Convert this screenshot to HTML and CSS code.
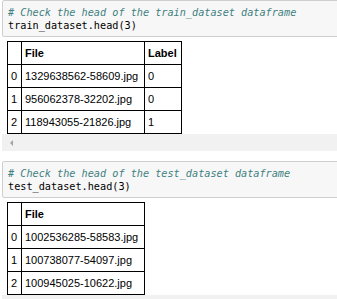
FILE: index.html
```html
<!DOCTYPE html>
<html lang="en">
<head>
  <meta charset="UTF-8" />
  <title>Notebook cells</title>
  <link rel="stylesheet" href="styles.css">
</head>
<body>
  <div class="cell">
    <div class="code">
      <div class="line comment"># Check the head of the train_dataset dataframe</div>
      <div class="line">train_dataset.head(<span class="num">3</span>)</div>
    </div>
    <div class="output">
      <table>
        <thead>
          <tr>
            <th class="idx"></th>
            <th class="file">File</th>
            <th class="label">Label</th>
          </tr>
        </thead>
        <tbody>
          <tr><td class="idx">0</td><td>1329638562-58609.jpg</td><td>0</td></tr>
          <tr><td class="idx">1</td><td>956062378-32202.jpg</td><td>0</td></tr>
          <tr><td class="idx">2</td><td>118943055-21826.jpg</td><td>1</td></tr>
        </tbody>
      </table>
    </div>
    <div class="scrollbar"><span class="arrow"></span></div>
  </div>

  <div class="cell">
    <div class="code">
      <div class="line comment"># Check the head of the test_dataset dataframe</div>
      <div class="line">test_dataset.head(<span class="num">3</span>)</div>
    </div>
    <div class="output">
      <table>
        <thead>
          <tr>
            <th class="idx"></th>
            <th class="file">File</th>
          </tr>
        </thead>
        <tbody>
          <tr><td class="idx">0</td><td>1002536285-58583.jpg</td></tr>
          <tr><td class="idx">1</td><td>100738077-54097.jpg</td></tr>
          <tr><td class="idx">2</td><td>100945025-10622.jpg</td></tr>
        </tbody>
      </table>
    </div>
    <div class="scrollbar"></div>
  </div>
</body>
</html>
```

FILE: styles.css
```css
body {
  margin: 0;
  background: #fff;
  overflow: hidden;
  font-family: "Liberation Sans", Arial, sans-serif;
}
.cell {
  margin-bottom: 10px;
}
.code {
  width: 400px;
  margin-left: 2px;
  padding: 5px 6px 4px 5px;
  background: #f7f7f7;
  border: 1px solid #cfcfcf;
  border-radius: 2px;
  font-family: "DejaVu Sans Mono", monospace;
  font-size: 10.2px;
  line-height: 13px;
  color: #000;
}
.line {
  white-space: pre;
}
.comment {
  color: #408080;
  font-style: italic;
}
.num {
  color: #000;
}
.output {
  padding: 4px 0 0 7px;
}
table {
  border-collapse: collapse;
  font-size: 11px;
  color: #000;
}
th, td {
  border: 1px solid #000;
  line-height: 22px;
  padding: 0 3px;
  text-align: left;
  vertical-align: middle;
}
th {
  font-weight: bold;
}
.idx {
  width: 7px;
}
.file {
  width: 116px;
}
.label {
  width: 30px;
}
.scrollbar {
  height: 17px;
  margin-left: 2px;
  background: #f1f1f1;
  display: flex;
  align-items: center;
  padding-left: 8px;
}
.arrow {
  width: 0;
  height: 0;
  border-top: 3px solid transparent;
  border-bottom: 3px solid transparent;
  border-right: 3px solid #a3a3a3;
}
```
